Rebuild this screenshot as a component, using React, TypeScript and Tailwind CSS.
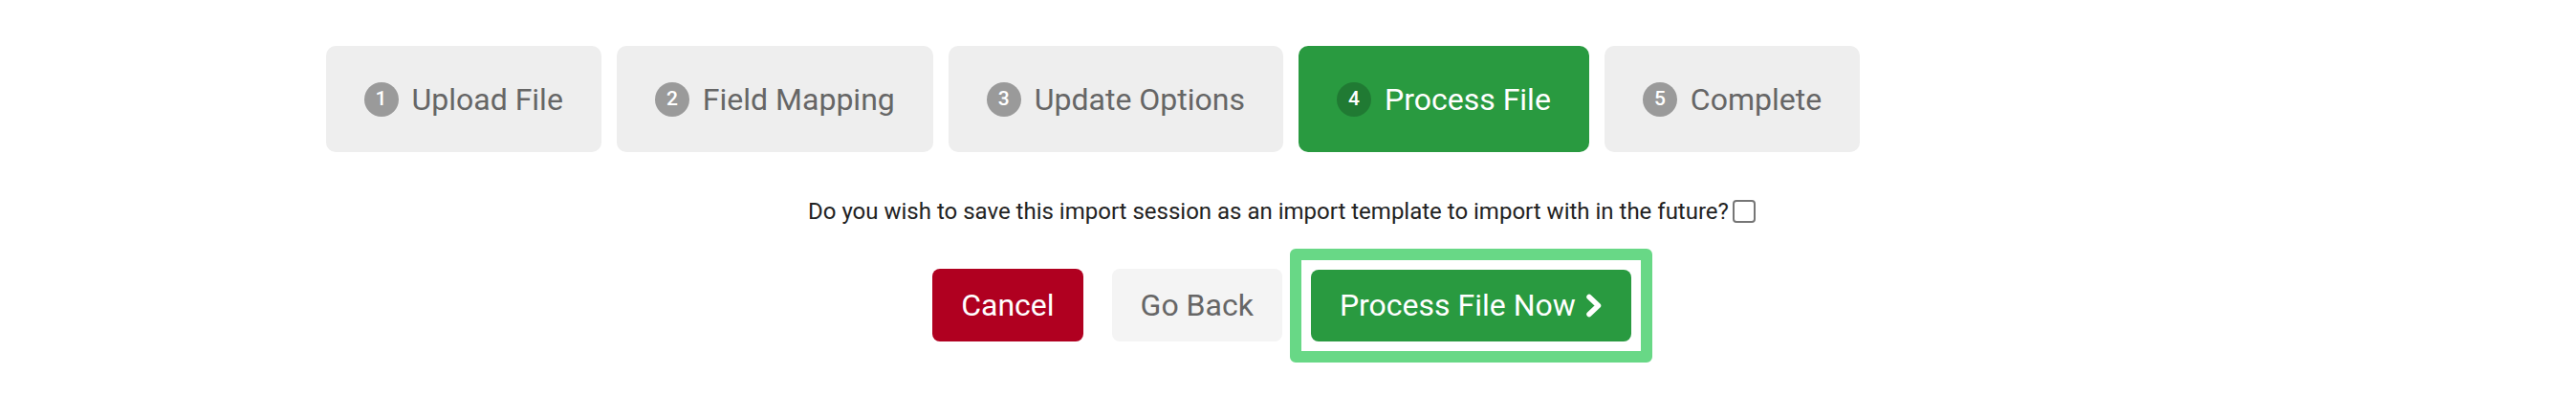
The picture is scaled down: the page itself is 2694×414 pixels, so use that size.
import React from 'react';

interface Step {
    num: number;
    label: string;
    active?: boolean;
}

const steps: Step[] = [
    { num: 1, label: 'Upload File' },
    { num: 2, label: 'Field Mapping' },
    { num: 3, label: 'Update Options' },
    { num: 4, label: 'Process File', active: true },
    { num: 5, label: 'Complete' },
];

const ChevronRight: React.FC = () => (
    <svg width="18" height="25" viewBox="0 0 18 25" fill="none" stroke="currentColor" strokeWidth={5.5} strokeLinecap="round" strokeLinejoin="round">
        <path d="M4 3.5l9.5 9L4 21.5" />
    </svg>
);

const StepTab: React.FC<{ step: Step }> = ({ step }) => (
    <div
        className={
            step.active
                ? 'h-[111px] px-10 rounded-[10px] flex items-center gap-[14px] bg-[#299a40] text-white'
                : 'h-[111px] px-10 rounded-[10px] flex items-center gap-[14px] bg-[#eeeeee] text-[#666666]'
        }
    >
        <span
            className={
                step.active
                    ? 'w-[36px] h-[36px] rounded-full flex items-center justify-center text-[21px] font-medium bg-[#207a33] text-white'
                    : 'w-[36px] h-[36px] rounded-full flex items-center justify-center text-[21px] font-medium bg-[#9a9a9a] text-white'
            }
        >
            {step.num}
        </span>
        <span className="text-[32px] leading-none">{step.label}</span>
    </div>
);

export default function App() {
    return (
        <div className="w-[2681px] h-[414px] bg-white font-['Roboto',sans-serif]">
            <div className="w-[2000px] mx-auto pt-[48px] flex gap-4">
                {steps.map((s) => (
                    <StepTab key={s.num} step={s} />
                ))}
            </div>

            <div className="mt-[48px] flex items-center justify-center gap-[4px] text-[24px] leading-[28px] text-[#222222]">
                <span>Do you wish to save this import session as an import template to import with in the future?</span>
                <input type="checkbox" className="w-[24px] h-[24px] appearance-none border-2 border-[#767676] rounded-[4px] bg-white" />
            </div>

            <div className="mt-[46px] flex items-center justify-center gap-[30px]">
                <button className="h-[76px] px-[30px] rounded-[8px] bg-[#b00020] text-white text-[32px]">Cancel</button>
                <button className="h-[76px] px-[30px] rounded-[8px] bg-[#f4f4f4] text-[#666666] text-[32px]">Go Back</button>
                <div className="-m-[22px] p-[10px] border-[12px] border-[#68d886] rounded-[6px]">
                    <button className="h-[75px] px-[30px] rounded-[8px] bg-[#299a40] text-white text-[32px] flex items-center gap-[10px]">
                        Process File Now
                        <ChevronRight />
                    </button>
                </div>
            </div>
        </div>
    );
}
